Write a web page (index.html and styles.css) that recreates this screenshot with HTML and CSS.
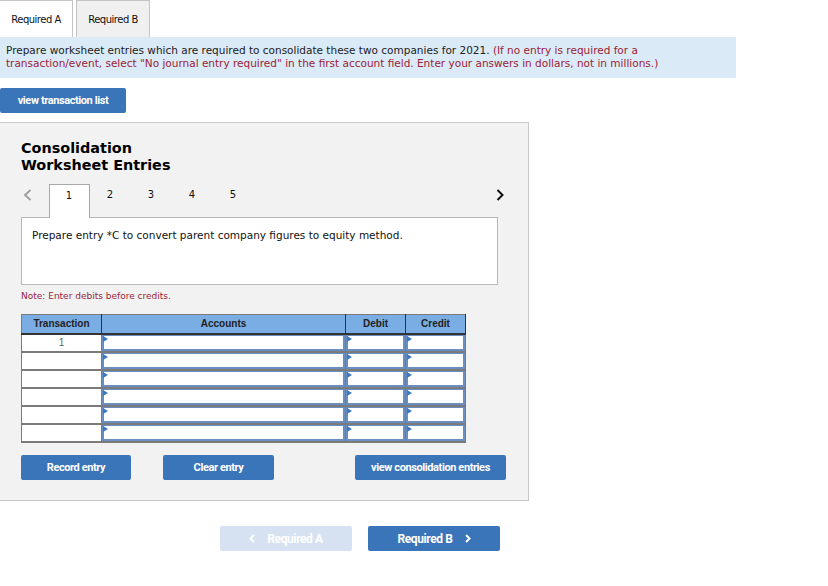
FILE: index.html
```html
<!DOCTYPE html>
<html lang="en">
<head>
  <meta charset="UTF-8" />
  <title>Consolidation Worksheet Entries</title>
  <link rel="stylesheet" href="styles.css">
</head>
<body>

<div class="tabs">
  <div class="tab active">Required A</div>
  <div class="tab">Required B</div>
</div>

<div class="instructions">
  Prepare worksheet entries which are required to consolidate these two companies for 2021.
  <span class="hint">(If no entry is required for a transaction/event, select "No journal entry required" in the first account field. Enter your answers in dollars, not in millions.)</span>
</div>

<button class="btn btn-list">view transaction list</button>

<div class="panel">
  <h3>Consolidation<br>Worksheet Entries</h3>

  <div class="entry-nav">
    <span class="arrow prev">
      <svg width="9" height="12" viewBox="0 0 9 12"><polyline points="7.5,1 2,6 7.5,11" fill="none" stroke="#9c9c9c" stroke-width="1.8"/></svg>
    </span>
    <span class="num current">1</span>
    <span class="num">2</span>
    <span class="num">3</span>
    <span class="num">4</span>
    <span class="num">5</span>
    <span class="arrow next">
      <svg width="8" height="12" viewBox="0 0 8 12"><polyline points="1.5,1 6.5,6 1.5,11" fill="none" stroke="#111" stroke-width="2"/></svg>
    </span>
  </div>

  <div class="entry-box">Prepare entry *C to convert parent company figures to equity method.</div>

  <p class="note">Note: Enter debits before credits.</p>

  <table class="journal">
    <thead>
      <tr>
        <th class="col-tr">Transaction</th>
        <th class="col-acc">Accounts</th>
        <th class="col-num">Debit</th>
        <th class="col-num">Credit</th>
      </tr>
    </thead>
    <tbody>
      <tr><td class="tr">1</td><td><div class="field"></div></td><td><div class="field"></div></td><td><div class="field"></div></td></tr>
      <tr><td class="tr"></td><td><div class="field"></div></td><td><div class="field"></div></td><td><div class="field"></div></td></tr>
      <tr><td class="tr"></td><td><div class="field"></div></td><td><div class="field"></div></td><td><div class="field"></div></td></tr>
      <tr><td class="tr"></td><td><div class="field"></div></td><td><div class="field"></div></td><td><div class="field"></div></td></tr>
      <tr><td class="tr"></td><td><div class="field"></div></td><td><div class="field"></div></td><td><div class="field"></div></td></tr>
      <tr><td class="tr"></td><td><div class="field"></div></td><td><div class="field"></div></td><td><div class="field"></div></td></tr>
    </tbody>
  </table>

  <div class="panel-actions">
    <button class="btn btn-record">Record entry</button>
    <button class="btn btn-clear">Clear entry</button>
    <button class="btn btn-view">view consolidation entries</button>
  </div>
</div>

<div class="bottom-nav">
  <button class="btn btn-nav disabled">
    <svg class="chev" width="6" height="9" viewBox="0 0 6 9"><polyline points="5,1 1.5,4.5 5,8" fill="none" stroke="#fff" stroke-width="2"/></svg>
    Required A
  </button>
  <button class="btn btn-nav">
    Required B
    <svg class="chev" width="6" height="9" viewBox="0 0 6 9"><polyline points="1,1 4.5,4.5 1,8" fill="none" stroke="#fff" stroke-width="2"/></svg>
  </button>
</div>

</body>
</html>
```

FILE: styles.css
```css
body {
  margin: 0;
  background-color: #fff;
  color: #111;
  font-family: "DejaVu Sans", Verdana, sans-serif;
}
.tabs {
  display: flex;
  gap: 3px;
  height: 37px;
}
.tab {
  width: 74px;
  box-sizing: border-box;
  border: 1px solid #c4c4c4;
  border-bottom: none;
  background-color: #f0f0f0;
  font-size: 10px;
  letter-spacing: -0.5px;
  display: flex;
  align-items: center;
  justify-content: center;
}
.tab.active {
  width: 74px;
  margin-left: -1px;
  background-color: #fff;
}
.instructions {
  width: 736px;
  box-sizing: border-box;
  background-color: #dbeaf7;
  padding: 7px 16px 8px 6px;
  font-size: 10.5px;
  line-height: 13px;
  color: #222;
}
.hint {
  color: #9b2335;
}
.btn {
  display: flex;
  flex: none;
  align-items: center;
  justify-content: center;
  border: none;
  border-radius: 2px;
  background-color: #3a75b9;
  color: #fff;
  font-family: Roboto, Arial, sans-serif;
  font-weight: bold;
  font-size: 11px;
  letter-spacing: -0.4px;
  height: 25px;
  padding: 0;
  cursor: pointer;
}
.btn-list {
  width: 126px;
  margin-top: 10px;
}
.panel {
  margin-top: 9px;
  margin-left: -1px;
  width: 530px;
  height: 379px;
  box-sizing: border-box;
  background-color: #f2f2f2;
  border: 1px solid #c9c9c9;
  padding: 17px 30px 0 21px;
}
.panel h3 {
  margin: 0;
  font-size: 14.4px;
  line-height: 17px;
  color: #000;
}
.entry-nav {
  display: flex;
  align-items: stretch;
  margin-top: 10px;
  height: 33px;
}
.arrow {
  display: flex;
  align-items: flex-start;
  padding-top: 5px;
}
.arrow.prev {
  width: 28px;
  padding-left: 2px;
  box-sizing: border-box;
}
.arrow.next {
  margin-left: auto;
  margin-right: -6px;
}
.num {
  width: 41px;
  box-sizing: border-box;
  text-align: center;
  font-size: 10px;
  padding-top: 5px;
  padding-right: 1px;
}
.num.current {
  background-color: #fff;
  border: 1px solid #a8a8a8;
  border-bottom: none;
  margin-bottom: -1px;
  position: relative;
}
.entry-box {
  width: 477px;
  height: 68px;
  box-sizing: border-box;
  background-color: #fff;
  border: 1px solid #b8b8b8;
  padding: 11px 10px;
  font-size: 10.5px;
}
.note {
  margin: 6px 0 0;
  font-size: 9px;
  line-height: 11px;
  color: #9b2335;
}
.journal {
  margin-top: 12px;
  border-collapse: collapse;
  font-family: "Liberation Sans", Arial, sans-serif;
  background-color: #fff;
}
.journal th {
  background-color: #7aade3;
  color: #222;
  font-size: 10px;
  font-weight: bold;
  line-height: 18px;
  padding: 0;
  border: 1px solid #333;
  border-top-color: #7c7c7c;
  border-left-color: #7c7c7c;
  border-bottom-width: 2px;
}
.col-tr { width: 79px; }
.col-acc { width: 243px; }
.col-num { width: 59px; }
.journal td {
  padding: 0;
  border: 1px solid #7b7b7b;
  border-bottom-width: 2px;
  line-height: 0;
  vertical-align: top;
}
.journal td.tr {
  font-size: 10px;
  line-height: 16px;
  text-align: center;
  vertical-align: middle;
  color: #666;
}
.field {
  position: relative;
  height: 16px;
  box-sizing: border-box;
  border: 2px solid #6b8ec0;
  border-top-width: 1px;
  background-color: #fff;
}
.field::before {
  content: "";
  position: absolute;
  left: -1px;
  top: 0;
  border-left: 5px solid #3a78c6;
  border-top: 3px solid transparent;
  border-bottom: 3px solid transparent;
}
.panel-actions {
  display: flex;
  margin-top: 12px;
}
.btn-record {
  width: 110px;
}
.btn-clear {
  width: 111px;
  margin-left: 32px;
}
.btn-view {
  width: 151px;
  margin-left: 81px;
}
.bottom-nav {
  display: flex;
  gap: 16px;
  margin: 25px 0 0 220px;
}
.btn-nav {
  width: 132px;
  height: 25px;
  font-size: 12px;
  gap: 12px;
}
.btn-nav.disabled {
  background-color: #d6e2f1;
  color: #fff;
}
```
